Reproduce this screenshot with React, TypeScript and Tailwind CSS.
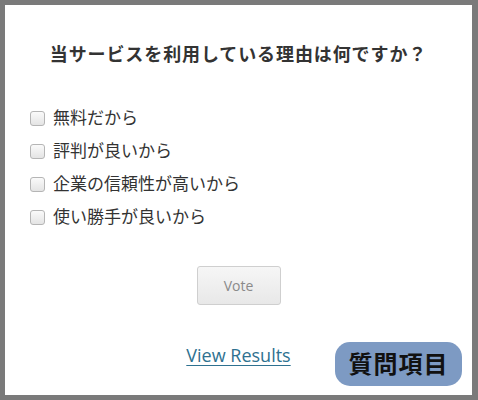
const options = [
  "無料だから",
  "評判が良いから",
  "企業の信頼性が高いから",
  "使い勝手が良いから",
];

const App = () => {
  return (
    <div className="w-[478px] h-[400px] bg-[#7a7a7a] pt-[5px] pl-[5px] pr-[6px] pb-[5px]">
      <div
        className="relative h-full bg-white flex flex-col"
        style={{ fontFamily: '"Open Sans", "Noto Sans CJK JP", sans-serif' }}
      >
        <h1 className="mt-[37px] text-center text-[18px] leading-[24px] font-bold text-[#333] tracking-[0.9px]">
          当サービスを利用している理由は何ですか？
        </h1>

        <ul className="mt-[40px] pl-[25px] flex flex-col gap-[9px]">
          {options.map((option, index) => (
            <li key={index} className="flex items-center h-[24px]">
              <span className="w-[15px] h-[15px] rounded-[3px] border border-[#b5b5b5] bg-gradient-to-b from-[#fafafa] to-[#e4e4e4]"></span>
              <span className="ml-[8px] text-[17px] leading-[24px] text-[#333]">
                {option}
              </span>
            </li>
          ))}
        </ul>

        <div className="mt-[37px] flex justify-center">
          <button
            type="button"
            className="w-[84px] h-[39px] rounded-[3px] border border-[#cfcfcf] bg-gradient-to-b from-[#f6f6f6] to-[#e8e8e8] text-[14px] text-[#8a8a8a]"
          >
            Vote
          </button>
        </div>

        <div className="mt-[38px] flex justify-center">
          <a className="text-[18px] leading-[24px] text-[#2e7190] underline underline-offset-[3px] decoration-[#2e7190]">
            View Results
          </a>
        </div>

        <div className="absolute left-[330px] top-[337px] w-[127px] h-[44px] rounded-[15px] bg-[#7d9ac3] flex items-center justify-center text-[24px] font-bold text-[#111] tracking-[1px]">
          質問項目
        </div>
      </div>
    </div>
  );
};

export default App;
